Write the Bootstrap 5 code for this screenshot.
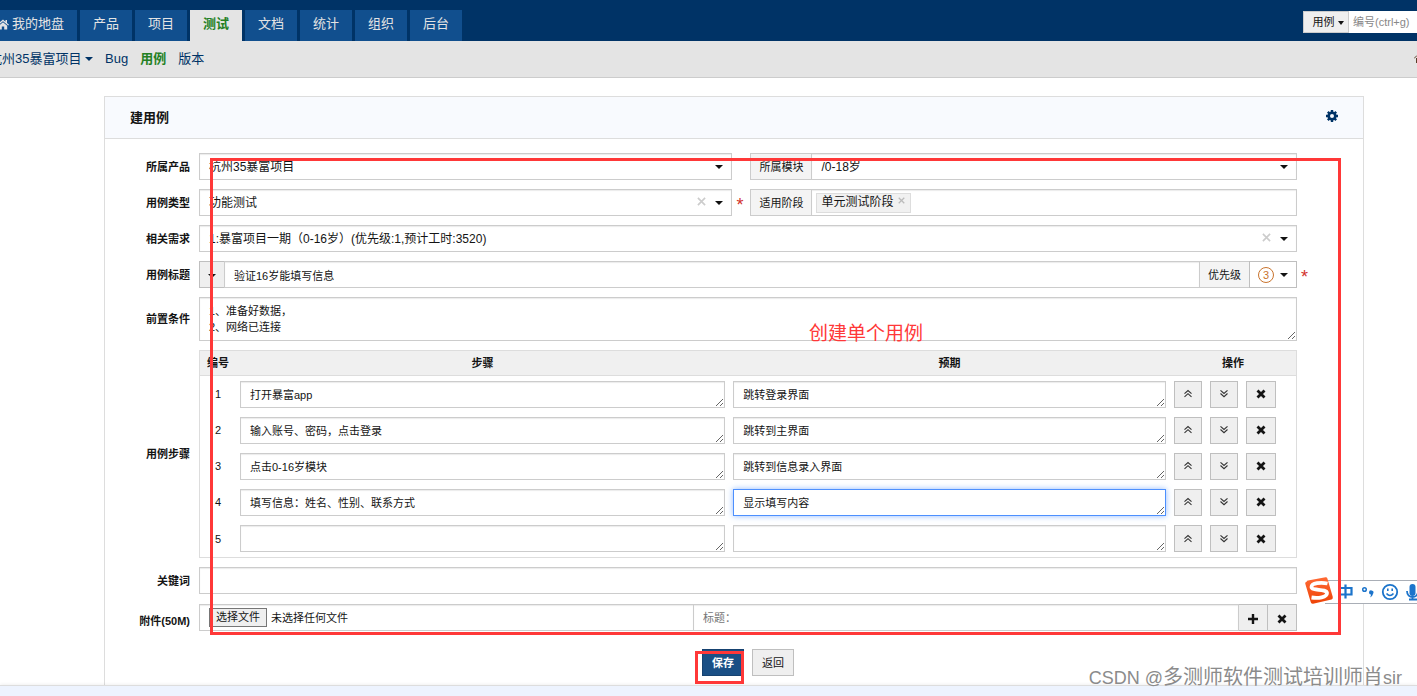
<!DOCTYPE html>
<html lang="zh-CN">
<head>
<meta charset="utf-8">
<meta name="viewport" content="width=device-width, initial-scale=1">
<title>建用例</title>
<link href="https://cdn.jsdelivr.net/npm/bootstrap@5.3.0/dist/css/bootstrap.min.css" rel="stylesheet">
<style>
:root{--line:#ccc;--navy:#036;--caret:url("data:image/svg+xml,%3Csvg xmlns='http://www.w3.org/2000/svg' viewBox='0 0 8 4'%3E%3Cpath d='M0 0h8L4 4z' fill='%23111'/%3E%3C/svg%3E")}
body{font-family:"Liberation Sans","Noto Sans CJK SC",sans-serif;font-size:11px;line-height:16px;color:#141414;background:#fff}
.page-shell{min-height:100vh;overflow:hidden}
.topbar{background:var(--navy);height:41px}
.main-tabs{gap:3px;margin-left:-16px}
.main-tabs .nav-link{font-size:13px;line-height:28px;height:31px;padding:0;width:52px;text-align:center;border-radius:0;color:#e4e4e4;background:#114f8e;white-space:nowrap}
.main-tabs .home-tab{width:93px;display:flex;align-items:center;justify-content:center;gap:3px;padding-bottom:3px}
.main-tabs .nav-link.active{background:#e4e4e4;color:#238023;font-weight:700}
.quick-search{width:114px;height:22px}
.quick-search .btn{width:46px;padding:0;font-size:11px;border:1px solid #ccc;border-radius:0;background:#efefef;color:#141414}
.quick-search input{min-width:0;border:0;border-radius:0;font-size:11px;padding:0 4px;color:#141414}
.quick-search input::placeholder{color:#888}
.subbar{height:37px;background:#e4e4e4;border-bottom:1px solid var(--line);font-size:13px}
.subbar .project-nav{gap:12px;margin-left:-11px;padding-bottom:1px}
.subbar a{color:var(--navy);text-decoration:none;white-space:nowrap}
.subbar a.current{color:#238023;font-weight:700}
.tri{display:inline-block;border:4px solid transparent;border-top-color:currentColor;border-bottom:0;vertical-align:middle}
.quick-search .tri{border-left-width:3px;border-right-width:3px}
.main-area{padding:18px 53px 0 104px}
.case-panel{border:1px solid #ddd;border-bottom:0}
.case-head{height:42px;background:#f8fafe;border-bottom:1px solid #ddd;padding:0 25px}
.case-head h1{font-size:13px;font-weight:700;line-height:20px;margin:0}
.case-head button{color:var(--navy);line-height:0}
.case-form{padding:14px 66px 9px 0;display:grid;grid-template-columns:85px minmax(0,1fr);column-gap:9px;row-gap:9px;align-items:center}
.case-form .field-name{font-weight:700;text-align:right;white-space:nowrap}
.pair{display:grid;grid-template-columns:minmax(0,533fr) minmax(0,546fr);column-gap:18px}
.field-box{height:27px;min-height:0;border:1px solid var(--line);border-radius:0;background-color:#fff;font-size:11px;line-height:16px;padding:0 9px;color:#141414;box-shadow:inset 0 1px 1px rgba(0,0,0,.08)}
select.field-box{font-size:12px;background:#fff var(--caret) no-repeat right 8px center/8px 4px;appearance:none;width:100%}
select.field-box:focus,.field-box:focus{box-shadow:none}
.addon{background:#f4f4f4;border:1px solid var(--line);border-radius:0;font-size:11px;line-height:16px;padding:0 8px;color:#141414}
.color-btn{width:25px}
.tall{height:44px;padding:5px 9px;resize:vertical}
.clear-btn{right:26px;top:0;height:24px;border:0;background:none;padding:0;color:#ccc;line-height:0}
.required-mark{color:#d2322d;font-size:18px;font-weight:400;line-height:18px;top:7px}
.chip-item{height:20px;margin-left:-5px;border:1px solid #ddd;background:#f1f1f1;font-size:12px;padding:0 5px 2px 4px}
.chip-item button{border:0;background:none;padding:0 0 3px;color:#bbb;line-height:0}
.gray-btn{border:1px solid #bfbfbf;border-radius:0;background:#efefef;color:#141414;font-size:11px;line-height:16px;padding:0}
.level{width:16px;height:16px;border:1px solid #c9742e;border-radius:50%;color:#c9742e;line-height:14px}
.level-btn{gap:6px}
.steps{table-layout:fixed;margin:0;border:1px solid #ddd;border-collapse:separate;border-spacing:0;font-size:11px;color:#141414}
.steps .col-no{width:36px}
.steps .col-step{width:45%}
.steps .col-act{width:126px}
.steps th{background:#f0f0f0;height:25px;padding:0;text-align:center;border-bottom:1px solid #ddd;vertical-align:middle}
.steps td{height:36px;padding:4px;border:0;vertical-align:middle;line-height:16px}
.steps tr:last-child td{height:37px}
.steps textarea{display:block;width:100%;padding:5px 9px;overflow:hidden;resize:vertical}
.steps textarea.is-current{border-color:#4d90fe;box-shadow:0 0 6px rgba(77,144,254,.6)}
.steps .gray-btn{width:28px;height:27px;line-height:0}
.steps .gray-btn.wide{width:30px}
.file-box{width:45%;border-right:0}
.file-btn{border:1px solid #767676;background:#efefef;height:19px;line-height:17px;padding:0 6px;cursor:pointer}
.attach-row{padding-top:1px}
.act-row{padding-top:9px}
.act{height:27px;width:42px}
.act.save{background:#1a4f85;border-color:#164270;color:#fff;font-weight:700}
.marker{border:3px solid #ff3838;pointer-events:none;z-index:5}
.marker-form{left:105px;right:22px;top:61px;height:477px}
.marker-save{left:-7px;top:2px;width:49px;height:33px}
.note{left:704px;top:223px;font:19px/24px "Noto Sans CJK SC",sans-serif;color:#ff3838;white-space:nowrap;z-index:5}
.ime-bar{right:0;top:577px;width:112px;height:28px;z-index:2}
.ime-bar .ime-strip{position:absolute;left:20px;right:0;top:3px;height:24px;background:#fff;border:1px solid #a9aeb6;border-width:1px 0}
.ime-bar svg{position:relative}
.watermark{right:15px;bottom:5px;font:20px/26px "Liberation Sans","Noto Sans CJK SC",sans-serif;color:#8b8b8b;text-shadow:-1px -1px 0 #fff;z-index:6;white-space:nowrap}
.watermark .latin{font-size:18px}
.bottom-bar{height:11px;background:#edf3fe;border-top:1px solid #ddd;box-shadow:0 -1px 3px rgba(0,0,0,.06);z-index:1}
</style>
</head>
<body>
<svg class="d-none">
  <symbol id="up" viewBox="0 0 10 10"><path d="M1.500 4.700 5 1.500l3.500 3.200M1.500 7.900 5 4.700l3.500 3.200" fill="none" stroke="#333" stroke-width="1.100"/></symbol>
  <symbol id="down" viewBox="0 0 10 10"><path d="M1.500 1.300 5 4.500l3.500-3.200M1.500 4.500 5 7.700l3.500-3.200" fill="none" stroke="#333" stroke-width="1.100"/></symbol>
  <symbol id="times" viewBox="0 0 10 10"><path d="M1.500 1.500l7 7m0-7l-7 7" fill="none" stroke="currentColor" stroke-width="2.800"/></symbol>
  <symbol id="thin" viewBox="0 0 10 10"><path d="M1 1l8 8m0-8l-8 8" fill="none" stroke="currentColor" stroke-width="1.800"/></symbol>
</svg>
<div class="page-shell d-flex flex-column position-relative">
  <header class="topbar d-flex justify-content-between align-items-end">
    <nav class="nav main-tabs flex-nowrap">
      <a class="nav-link home-tab" href="#"><svg width="12" height="11" viewBox="0 0 12 11" fill="currentColor"><path d="M6 .5 0 5.700l.8.900L6 2.200l5.200 4.400.8-.9-2-1.700V1H8.500v1.700zM6 3.200 1.800 6.700V10.500h3V7.500h2.400v3h3V6.700z"/></svg>我的地盘</a>
      <a class="nav-link" href="#">产品</a>
      <a class="nav-link" href="#">项目</a>
      <a class="nav-link active" href="#">测试</a>
      <a class="nav-link" href="#">文档</a>
      <a class="nav-link" href="#">统计</a>
      <a class="nav-link" href="#">组织</a>
      <a class="nav-link" href="#">后台</a>
    </nav>
    <form class="quick-search d-flex mb-2">
      <button class="btn flex-shrink-0 ps-1" type="button">用例 <span class="tri"></span></button>
      <input class="w-100" type="text" placeholder="编号(ctrl+g)" aria-label="编号">
    </form>
  </header>
  <div class="subbar d-flex justify-content-between align-items-center">
    <nav class="project-nav d-flex">
      <a href="#">杭州35暴富项目 <span class="tri"></span></a>
      <a href="#">Bug</a>
      <a class="current" href="#">用例</a>
      <a href="#">版本</a>
    </nav>
    <svg width="3" height="8" viewBox="0 0 3 8"><path d="M0 3.500 3 .5M2.500 3v5" stroke="#5a3c28" fill="none"/></svg>
  </div>

  <main class="main-area flex-grow-1 d-flex">
    <section class="case-panel position-relative flex-grow-1">
      <div class="case-head d-flex justify-content-between align-items-center">
        <h1>建用例</h1>
        <button class="border-0 bg-transparent p-0 pb-1" type="button" aria-label="设置"><svg width="12" height="12" viewBox="0 0 12 12"><g stroke="currentColor" fill="none"><circle cx="6" cy="6" r="3.300" stroke-width="2.600"/><path d="M6 0v2.500M6 9.500V12M0 6h2.500M9.500 6H12M1.800 1.800l1.700 1.700M8.500 8.500l1.700 1.700M10.200 1.800 8.500 3.500M3.500 8.500l-1.700 1.700" stroke-width="2.400"/></g></svg></button>
      </div>
      <form class="case-form">
        <label class="field-name" for="product">所属产品</label>
        <div class="pair">
          <select class="field-box" id="product"><option>杭州35暴富项目</option></select>
          <div class="d-flex">
            <label class="addon border-end-0 d-flex align-items-center text-nowrap" for="module">所属模块</label>
            <select class="field-box" id="module"><option>/0-18岁</option></select>
          </div>
        </div>

        <label class="field-name" for="type">用例类型</label>
        <div class="pair">
          <div class="position-relative">
            <select class="field-box d-block" id="type"><option>功能测试</option></select>
            <button class="clear-btn position-absolute" type="button" aria-label="清除"><svg width="9" height="9"><use href="#thin"/></svg></button>
            <span class="required-mark position-absolute start-100 ms-1">*</span>
          </div>
          <div class="d-flex">
            <span class="addon border-end-0 d-flex align-items-center text-nowrap">适用阶段</span>
            <div class="field-box flex-grow-1 d-flex align-items-center">
              <span class="chip-item d-flex align-items-center gap-1">单元测试阶段<button type="button" aria-label="移除"><svg width="7" height="7"><use href="#thin"/></svg></button></span>
            </div>
          </div>
        </div>

        <label class="field-name" for="story">相关需求</label>
        <div class="position-relative">
          <select class="field-box d-block" id="story"><option>1:暴富项目一期（0-16岁）(优先级:1,预计工时:3520)</option></select>
          <button class="clear-btn position-absolute" type="button" aria-label="清除"><svg width="9" height="9"><use href="#thin"/></svg></button>
        </div>

        <label class="field-name" for="title">用例标题</label>
        <div class="d-flex position-relative">
          <button class="gray-btn color-btn border-end-0 flex-shrink-0" type="button" aria-label="颜色"><span class="tri"></span></button>
          <input class="field-box flex-grow-1" id="title" type="text" value="验证16岁能填写信息">
          <span class="addon border-start-0 border-end-0 d-flex align-items-center text-nowrap">优先级</span>
          <button class="gray-btn level-btn bg-white d-flex align-items-center px-2" type="button"><span class="level">3</span><span class="tri"></span></button>
          <span class="required-mark position-absolute start-100 ms-1">*</span>
        </div>

        <label class="field-name" for="pre">前置条件</label>
        <textarea class="field-box tall w-100 d-block" id="pre">1、准备好数据，
2、网络已连接</textarea>

        <span class="field-name">用例步骤</span>
        <table class="table steps w-100">
          <thead><tr><th class="col-no">编号</th><th class="col-step">步骤</th><th>预期</th><th class="col-act">操作</th></tr></thead>
          <tbody id="rows"></tbody>
        </table>

        <label class="field-name" for="keywords">关键词</label>
        <input class="field-box w-100" id="keywords" type="text">

        <span class="field-name pt-2">附件(50M)</span>
        <div class="d-flex attach-row">
          <div class="field-box file-box d-flex align-items-center gap-1">
            <label class="file-btn" for="attach">选择文件</label><span>未选择任何文件</span>
            <input class="visually-hidden" id="attach" type="file">
          </div>
          <input class="field-box flex-grow-1" type="text" placeholder="标题：" aria-label="标题">
          <button class="gray-btn border-start-0 px-2" type="button" aria-label="添加"><svg width="12" height="12" viewBox="0 0 12 12"><path d="M6 1v10M1 6h10" stroke="#141414" stroke-width="2.400"/></svg></button>
          <button class="gray-btn border-start-0 px-2" type="button" aria-label="删除"><svg width="12" height="10"><use href="#times"/></svg></button>
        </div>

        <div></div>
        <div class="d-flex justify-content-center gap-2 act-row">
          <span class="position-relative"><button class="gray-btn act save d-block" type="submit">保存</button><span class="marker marker-save position-absolute"></span></span>
          <button class="gray-btn act" type="button">返回</button>
        </div>
      </form>
      <div class="marker marker-form position-absolute"></div>
      <div class="note position-absolute">创建单个用例</div>
    </section>
  </main>
  <footer class="bottom-bar"></footer>

  <div class="ime-bar position-absolute">
    <div class="ime-strip"></div>
    <svg width="112" height="28" viewBox="0 0 112 28">
      <defs><linearGradient id="sg" x2="0" y2="1"><stop offset="0" stop-color="#ff6a35"/><stop offset="1" stop-color="#ee4306"/></linearGradient></defs>
      <path d="M2 4.500Q1 4 3 3.400L20.500.2Q22 0 22.400 1.500L27.800 20Q28 22 26.500 22.500L8 26.800Q6 27 5.700 25L.2 6.500Q0 5 2 4.500Z" fill="url(#sg)"/>
      <path d="M22.500 6.500C16 5 6.500 6 6.500 10 6.500 14 21.500 11.500 22 16 22 20.500 13 21.500 6.500 20.500" fill="none" stroke="#fff" stroke-width="3.800"/>
      <g fill="none" stroke="#1c74cb" stroke-width="2.200">
        <path d="M34.500 11h12v6.500h-12zM40.500 7.500v14"/>
        <circle cx="59.500" cy="12.500" r="1.800" stroke-width="1.500"/>
        <circle cx="85" cy="15" r="7.200" stroke-width="1.800"/>
        <path d="M81.500 16.500q3.500 4 7 0M82.800 11.500v2.500M87.200 11.500v2.500" stroke-width="1.600"/>
        <path d="M102 14c0 8 11 8 11 0M107.500 20v3M104 22.500h8" stroke-width="1.800"/>
      </g>
      <path d="M64 15.500a2.200 2.200 0 1 1 4.200 1q-.7 3-3.200 4 1.200-1.800.9-3a2 2 0 0 1-1.900-2z" fill="#1c74cb"/>
      <rect x="104.500" y="7" width="6" height="12" rx="3" fill="#1c74cb"/>
    </svg>
  </div>
  <div class="watermark position-absolute"><span class="latin">CSDN @</span>多测师软件测试培训师肖<span class="latin">sir</span></div>
</div>
<script src="https://cdn.jsdelivr.net/npm/bootstrap@5.3.0/dist/js/bootstrap.bundle.min.js"></script>
<script>
const steps=[["打开暴富app","跳转登录界面"],["输入账号、密码，点击登录","跳转到主界面"],["点击0-16岁模块","跳转到信息录入界面"],["填写信息：姓名、性别、联系方式","显示填写内容"],["",""]];
document.getElementById("rows").innerHTML=steps.map(([s,e],i)=>`<tr>
<td class="text-center">${i+1}</td>
<td><textarea class="field-box" aria-label="步骤${i+1}">${s}</textarea></td>
<td><textarea class="field-box${i===3?" is-current":""}" aria-label="预期${i+1}">${e}</textarea></td>
<td><div class="d-flex gap-2">
<button class="gray-btn" type="button" aria-label="上移"><svg width="10" height="10"><use href="#up"/></svg></button>
<button class="gray-btn" type="button" aria-label="下移"><svg width="10" height="10"><use href="#down"/></svg></button>
<button class="gray-btn wide" type="button" aria-label="删除"><svg width="10" height="10"><use href="#times"/></svg></button>
</div></td></tr>`).join("");
</script>
</body>
</html>
